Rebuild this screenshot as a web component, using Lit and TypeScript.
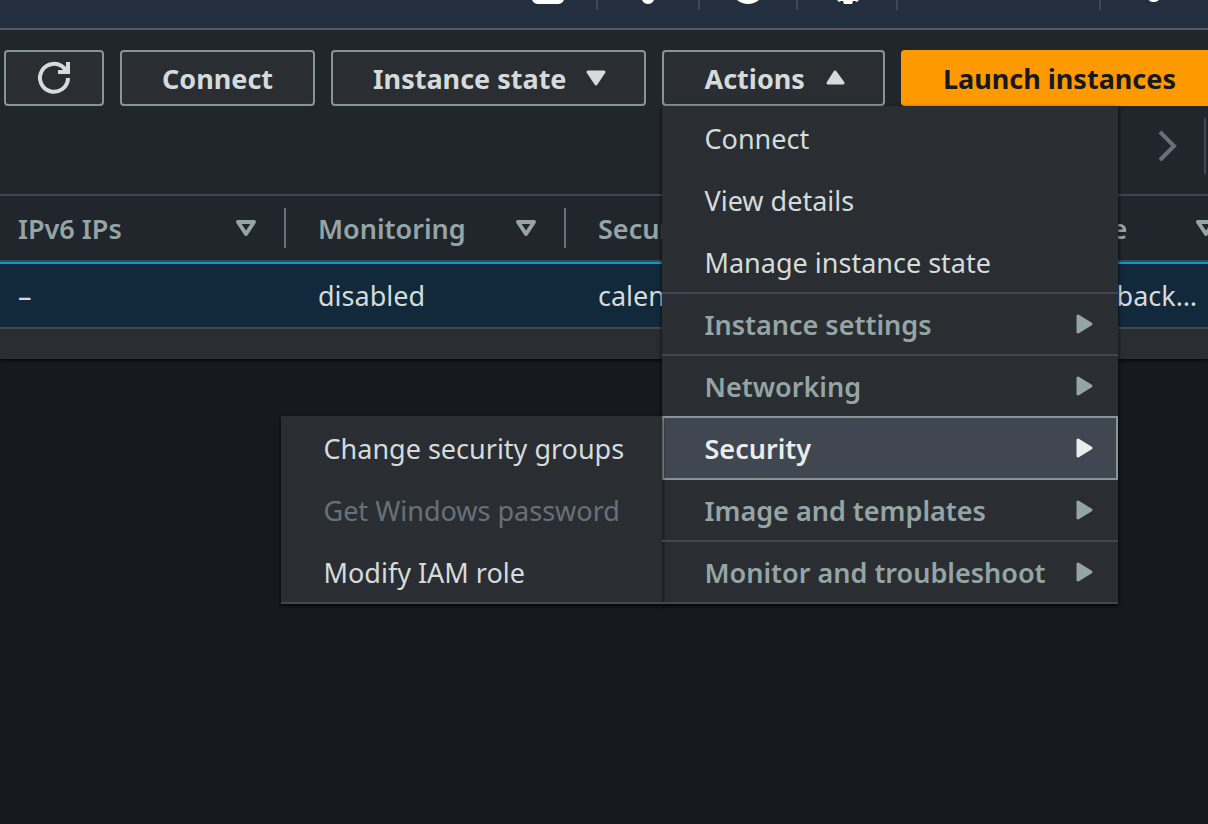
import { LitElement, html, css, svg, nothing } from "lit";
import { customElement, property, state } from "lit/decorators.js";
import { classMap } from "lit/directives/class-map.js";

interface MenuEntry {
  label: string;
  disabled?: boolean;
  children?: MenuEntry[];
}

interface Column {
  label: string;
  value: string;
  width: number;
}

const ACTIONS: MenuEntry[] = [
  { label: "Connect" },
  { label: "View details" },
  { label: "Manage instance state" },
  { label: "Instance settings", children: [] },
  { label: "Networking", children: [] },
  {
    label: "Security",
    children: [
      { label: "Change security groups" },
      { label: "Get Windows password", disabled: true },
      { label: "Modify IAM role" },
    ],
  },
  { label: "Image and templates", children: [] },
  { label: "Monitor and troubleshoot", children: [] },
];

const COLUMNS: Column[] = [
  { label: "IPv6 IPs", value: "–", width: 286 },
  { label: "Monitoring", value: "disabled", width: 280 },
  { label: "Security group name", value: "calendar-backend", width: 400 },
  { label: "Key name", value: "calendar-backend", width: 280 },
];

const CARET_PATHS = {
  up: svg`<path d="M9 20 H24 L16 9 Z" />`,
  down: svg`<path d="M8 9 H24 L16 21 Z" />`,
  right: svg`<path d="M10 7 L23 15 L10 23 Z" />`,
};

@customElement("console-nav")
class ConsoleNav extends LitElement {
  static styles = css`
    :host {
      display: block;
      height: 28px;
      border-bottom: 2px solid #545b64;
      background: #232f3e;
      overflow: hidden;
    }
    .strip {
      display: flex;
      justify-content: flex-end;
      height: 10px;
    }
    .cell {
      box-sizing: border-box;
      display: flex;
      justify-content: center;
      background: none;
      padding: 0;
      margin: 0;
      border: 0 solid #414750;
      border-left-width: 2px;
    }
    .cell svg {
      display: block;
      width: 40px;
      height: 10px;
      fill: #fff;
    }
    .shell { width: 98px; border-color: transparent; }
    .bell { width: 102px; }
    .help { width: 98px; }
    .gear { width: 100px; }
    .region { width: 203px; }
    .account { width: 109px; }
  `;

  render() {
    return html`
      <nav class="strip" aria-label="Services">
        <button class="cell shell" aria-label="CloudShell">
          <svg viewBox="0 0 40 10"><path d="M4 0 H36 Q34 4 30 4 H10 Q6 4 4 0 Z" /></svg>
        </button>
        <button class="cell bell" aria-label="Notifications">
          <svg viewBox="0 0 40 10"><path d="M14 0 H26 Q24 4 20 4 Q16 4 14 0 Z" /></svg>
        </button>
        <button class="cell help" aria-label="Help">
          <svg viewBox="0 0 40 10"><path d="M9 0 H31 Q26 4 20 4 Q14 4 9 0 Z" /></svg>
        </button>
        <button class="cell gear" aria-label="Settings">
          <svg viewBox="0 0 40 10"><path d="M10 0 H32 L30 2 L28 1 L26 1 L25 4 H17 L16 1 L14 1 L12 2 Z" /></svg>
        </button>
        <button class="cell region" aria-label="Region"></button>
        <button class="cell account" aria-label="Account">
          <svg viewBox="0 0 40 10"><path d="M14 0 H24 Q22 2 19 2 Q15 2 14 0 Z" /></svg>
        </button>
      </nav>
    `;
  }
}

@customElement("action-menu")
class ActionMenu extends LitElement {
  @property({ attribute: false }) entries: MenuEntry[] = [];
  @property() opened = "";

  static styles = css`
    :host {
      display: block;
    }
    .menu {
      box-sizing: border-box;
      list-style: none;
      margin: 0;
      padding: 2px 0 0;
      background: #2a2e33;
      box-shadow: 0 2px 4px rgba(0, 0, 0, 0.7), 0 1px 3px rgba(0, 0, 0, 0.3);
    }
    .row {
      position: relative;
    }
    .item {
      box-sizing: border-box;
      display: flex;
      align-items: center;
      justify-content: space-between;
      width: 100%;
      height: 62px;
      margin: 0;
      padding: 2px 18px 0 42px;
      border: 0;
      border-bottom: 2px solid transparent;
      background: none;
      color: #d5dbdb;
      font: inherit;
      text-align: left;
      white-space: nowrap;
    }
    .item:disabled {
      color: #687078;
    }
    .ruled {
      border-bottom-color: #414750;
    }
    .group {
      color: #95a5a6;
      font-weight: 650;
    }
    .current {
      height: 64px;
      margin-top: -2px;
      padding: 2px 16px 0 40px;
      border: 2px solid #879596;
      background: #414750;
      color: #eaeded;
    }
    .arrow {
      flex: none;
      width: 32px;
      height: 32px;
      fill: currentColor;
      stroke: currentColor;
      stroke-width: 3;
      stroke-linejoin: round;
    }
    .flyout {
      position: absolute;
      top: 0;
      right: 100%;
      width: 381px;
    }
  `;

  render() {
    return html`<ul class="menu" role="menu">
      ${this.entries.map((entry, index) => {
        const next = this.entries[index + 1];
        const current = entry.label === this.opened;
        const classes = {
          item: true,
          group: !!entry.children,
          ruled: !next || !!next.children,
          current,
        };
        return html`<li class="row" role="none">
          <button class=${classMap(classes)} role="menuitem" ?disabled=${!!entry.disabled}>
            <span>${entry.label}</span>
            ${entry.children ? html`<svg class="arrow" viewBox="0 0 32 32">${CARET_PATHS.right}</svg>` : nothing}
          </button>
          ${current ? html`<action-menu class="flyout" .entries=${entry.children}></action-menu>` : nothing}
        </li>`;
      })}
    </ul>`;
  }
}

@customElement("instance-table")
class InstanceTable extends LitElement {
  static styles = css`
    :host {
      display: block;
      overflow: hidden;
    }
    .grid {
      width: 1246px;
      table-layout: fixed;
      border-collapse: separate;
      border-spacing: 0;
    }
    .head {
      height: 64px;
      padding: 0;
      border-top: 2px solid #414750;
      border-bottom: 2px solid #414750;
      color: #95a5a6;
      text-align: left;
      font-weight: 650;
    }
    .title {
      box-sizing: border-box;
      display: flex;
      align-items: center;
      justify-content: space-between;
      height: 40px;
      padding: 2px 22px 0 32px;
      border-right: 2px solid #687078;
      white-space: nowrap;
    }
    .sort {
      flex: none;
      width: 32px;
      height: 32px;
      fill: none;
      stroke: currentColor;
      stroke-width: 4;
      stroke-linejoin: round;
    }
    .cell {
      height: 63px;
      padding: 0 40px 0 32px;
      border-top: 2px solid #00a1c9;
      border-bottom: 2px solid #414750;
      background: #12293b;
      color: #d5dbdb;
      overflow: hidden;
      text-overflow: ellipsis;
      white-space: nowrap;
    }
    .first {
      padding-left: 18px;
    }
  `;

  render() {
    return html`<table class="grid">
      <colgroup>
        ${COLUMNS.map((column) => html`<col style="width: ${column.width}px" />`)}
      </colgroup>
      <thead>
        <tr>
          ${COLUMNS.map(
            (column, index) => html`<th class="head" scope="col">
              <div class=${classMap({ title: true, first: index === 0 })}>
                <span>${column.label}</span>
                <svg class="sort" viewBox="0 0 32 32">${CARET_PATHS.down}</svg>
              </div>
            </th>`
          )}
        </tr>
      </thead>
      <tbody>
        <tr>
          ${COLUMNS.map(
            (column, index) => html`<td class=${classMap({ cell: true, first: index === 0 })}>${column.value}</td>`
          )}
        </tr>
      </tbody>
    </table>`;
  }
}

@customElement("app-root")
class AppRoot extends LitElement {
  @state() private opened = "Security";

  static styles = css`
    :host {
      display: block;
      min-height: 100vh;
      overflow: hidden;
      background: #16191f;
      font-family: "Noto Sans", sans-serif;
      font-size: 27px;
      line-height: 40px;
    }
    .panel {
      background: #21252c;
      box-shadow: 0 2px 3px rgba(0, 0, 0, 0.6);
    }
    .toolbar {
      display: flex;
      gap: 16px;
      padding: 20px 0 0 4px;
    }
    .button {
      box-sizing: border-box;
      display: flex;
      align-items: center;
      justify-content: center;
      flex: none;
      height: 56px;
      margin: 0;
      padding: 2px 40px 0;
      border: 2px solid #879596;
      border-radius: 4px;
      background: #2a2e33;
      color: #d5dbdb;
      font: inherit;
      font-weight: 700;
      white-space: nowrap;
    }
    .refresh {
      width: 100px;
      padding: 0;
    }
    .primary {
      border-color: #ff9900;
      background: #ff9900;
      color: #16191f;
    }
    .caret {
      width: 32px;
      height: 32px;
      margin-left: 14px;
      margin-right: -8px;
      fill: currentColor;
      stroke: currentColor;
      stroke-width: 3;
      stroke-linejoin: round;
    }
    .reload {
      width: 36px;
      height: 36px;
      fill: none;
      stroke: currentColor;
      stroke-width: 4;
    }
    .dropdown {
      position: relative;
      flex: none;
      z-index: 1;
    }
    .menu {
      position: absolute;
      top: 100%;
      left: 0;
      width: 456px;
    }
    .pager {
      display: flex;
      justify-content: flex-end;
      align-items: center;
      gap: 21px;
      height: 56px;
      padding: 12px 2px 20px 0;
    }
    .next {
      width: 32px;
      height: 32px;
      margin: 0;
      padding: 0;
      border: 0;
      background: none;
    }
    .chevron {
      display: block;
      width: 32px;
      height: 32px;
      fill: none;
      stroke: #687078;
      stroke-width: 4;
    }
    .divider {
      width: 2px;
      height: 56px;
      background: #414750;
    }
    .footer {
      height: 30px;
      background: #2a2e33;
    }
  `;

  render() {
    return html`
      <console-nav></console-nav>
      <main class="panel">
        <div class="toolbar">
          <button class="button refresh" aria-label="Refresh">
            <svg class="reload" viewBox="0 0 36 36">
              <path d="M32 18 A14 14 0 1 1 28 8 L31 11" />
              <path d="M32 2 V12 H22" />
            </svg>
          </button>
          <button class="button">Connect</button>
          <button class="button">
            Instance state
            <svg class="caret" viewBox="0 0 32 32">${CARET_PATHS.down}</svg>
          </button>
          <div class="dropdown">
            <button class="button" aria-haspopup="menu" aria-expanded="true">
              Actions
              <svg class="caret" viewBox="0 0 32 32">${CARET_PATHS.up}</svg>
            </button>
            <action-menu class="menu" .entries=${ACTIONS} .opened=${this.opened}></action-menu>
          </div>
          <button class="button primary">Launch instances</button>
        </div>
        <div class="pager">
          <button class="next" aria-label="Next page">
            <svg class="chevron" viewBox="0 0 32 32"><path d="M9 2 L23 16 L9 30" /></svg>
          </button>
          <div class="divider"></div>
        </div>
        <instance-table></instance-table>
        <div class="footer"></div>
      </main>
    `;
  }
}
